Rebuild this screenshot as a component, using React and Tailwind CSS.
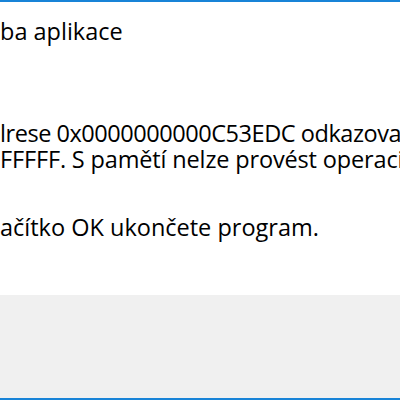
import React from "react";

function App() {
  return (
    <div
      className="w-[400px] h-[400px] overflow-hidden flex flex-col bg-white text-black"
      style={{ fontFamily: '"Open Sans", "Noto Sans", sans-serif' }}
    >
      {/* window border top */}
      <div className="h-[2px] bg-[#1883d7] shrink-0" />

      {/* message area */}
      <div className="h-[293px] shrink-0 pt-[16px] whitespace-nowrap text-[23.5px] leading-[26px]">
        <div>ba aplikace</div>
        <div className="mt-[76px]">
          <div className="tracking-[-0.45px]">lrese 0x0000000000C53EDC odkazoval</div>
          <div className="tracking-[-0.15px]">FFFFF. S pamětí nelze provést operaci</div>
        </div>
        <div className="mt-[42px]">ačítko OK ukončete program.</div>
      </div>

      {/* button strip */}
      <div className="flex-1 bg-[#f0f0f0]" />
      <div className="h-[2px] bg-[#1883d7] shrink-0" />
    </div>
  );
}

export default App;
